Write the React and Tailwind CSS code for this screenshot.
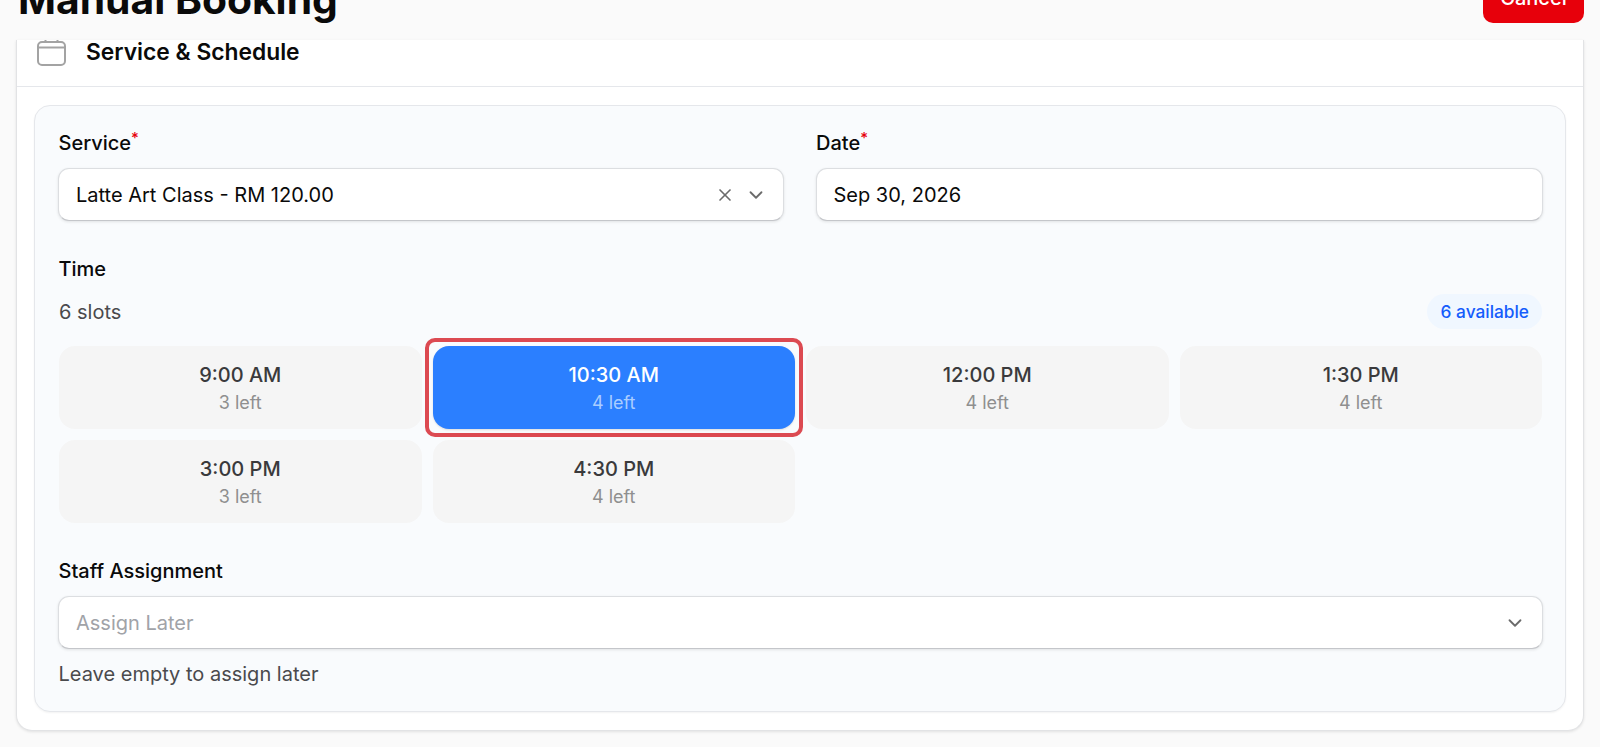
import React from "react";
import { ChevronDown, X } from "lucide-react";

const slots = [
  ["9:00 AM", "3 left"],
  ["10:30 AM", "4 left", true],
  ["12:00 PM", "4 left"],
  ["1:30 PM", "4 left"],
  ["3:00 PM", "3 left"],
  ["4:30 PM", "4 left"],
];

function Label({ children, required }) {
  return (
    <div className="h-[24px] flex items-center text-[20px] font-medium text-[#0a0a0a] leading-none ml-[0.5px]">
      <span>{children}</span>
      {required && <span className="text-[#e7000b] text-[15px] self-start -mt-[1px] leading-none">*</span>}
    </div>
  );
}

function Field({ children }) {
  return (
    <div className="h-[53px] bg-white rounded-[11px] border border-[#dcdee1] border-b-[#c4c6ca] shadow-[0_1px_3px_rgba(0,0,0,0.1)] flex items-center pl-[17px] pr-[17px] text-[20px] text-[#0a0a0a]">
      {children}
    </div>
  );
}

function Slot({ time, left, selected }) {
  return (
    <div
      className={
        "relative h-[83px] rounded-[16px] flex flex-col items-center pt-[17px] " +
        (selected ? "bg-[#2b7fff] text-white shadow-[0_1px_2px_rgba(0,0,0,0.12)]" : "bg-[#f5f5f5] text-[#3a3a3c]")
      }
    >
      {selected && <div className="absolute -inset-[8px] rounded-[10px] border-[4px] border-[#dc4a52]" />}
      <div className="text-[20px] font-medium leading-[24px]">{time}</div>
      <div className={"text-[18px] leading-[20px] mt-[6px] " + (selected ? "text-[#a9cdff]" : "text-[#8f8f8f]")}>{left}</div>
    </div>
  );
}

export default function App() {
  return (
    <div className="h-[747px] w-full overflow-hidden bg-[#fafafa] px-[16px] font-['Inter',sans-serif] flex flex-col">
      <div className="h-[40px] shrink-0 flex items-end justify-between overflow-hidden">
        <h1 className="text-[40.8px] font-bold leading-none text-[#0a0a0a] mb-[20px] ml-[2px] whitespace-nowrap">Manual Booking</h1>
        <div className="w-[101px] h-[44px] mb-[17px] bg-[#e7000b] rounded-[10px] text-white text-[20px] font-medium flex items-center justify-center pb-[7px]">Cancel</div>
      </div>
      <div className="h-[691px] shrink-0 bg-white border-x border-b border-[#e2e3e5] rounded-b-[16px] shadow-[0_1px_3px_rgba(0,0,0,0.1)] flex flex-col">
        <div className="h-[47px] shrink-0 border-b border-[#e5e7eb] flex items-start pl-[20px]">
          <svg width="30" height="26" viewBox="0 0 30 26" fill="none" stroke="#a3a3a3" strokeWidth="2" className="-ml-[1px]">
            <rect x="2" y="2" width="27" height="23" rx="4" />
            <path d="M2 7.5H29" />
            <path d="M9.5 0V3" />
            <path d="M21.5 0V3" />
          </svg>
          <div className="ml-[20px] h-[25px] flex items-center text-[22.8px] font-semibold text-[#0a0a0a]">Service &amp; Schedule</div>
        </div>
        <div className="mx-[17px] mt-[18px] h-[607px] bg-[#f9fbfd] border border-[#e5e7eb] rounded-[16px] shadow-[0_1px_2px_rgba(0,0,0,0.05)] pl-[23px] pr-[22px] pt-[25px]">
          <div className="grid grid-cols-[725.5px_1fr] gap-x-[32px]">
            <div>
              <Label required>Service</Label>
              <div className="mt-[13px]">
                <Field>
                  <span className="flex-1">Latte Art Class - RM 120.00</span>
                  <X size={20} strokeWidth={2} className="text-[#6b6b6b] mr-[10px]" />
                  <ChevronDown size={22} strokeWidth={2} className="text-[#6b6b6b] -mr-[1px]" />
                </Field>
              </div>
            </div>
            <div>
              <Label required>Date</Label>
              <div className="mt-[13px]">
                <Field>Sep 30, 2026</Field>
              </div>
            </div>
          </div>
          <div className="mt-[36px]">
            <Label>Time</Label>
          </div>
          <div className="mt-[13px] flex items-center justify-between">
            <div className="text-[20px] text-[#4a4a4d] ml-[1px]">6 slots</div>
            <div className="h-[35px] pl-[14px] pr-[13px] mr-[1px] rounded-full bg-[#f0f7ff] text-[#155dfc] text-[17.3px] font-medium flex items-center">6 available</div>
          </div>
          <div className="mt-[17px] mx-[1px] grid grid-cols-4 gap-x-[11px] gap-y-[11px]">
            {slots.map(([t, l, s]) => (
              <Slot key={t} time={t} left={l} selected={s} />
            ))}
          </div>
          <div className="mt-[36px]">
            <Label>Staff Assignment</Label>
          </div>
          <div className="mt-[13px]">
            <Field>
              <span className="flex-1 text-[#a1a3a8]">Assign Later</span>
              <ChevronDown size={22} strokeWidth={2} className="text-[#6b6b6b] -mr-[1px]" />
            </Field>
          </div>
          <div className="mt-[13px] ml-[0.5px] text-[20px] leading-[24px] text-[#4a4a4d]">Leave empty to assign later</div>
        </div>
      </div>
    </div>
  );
}
